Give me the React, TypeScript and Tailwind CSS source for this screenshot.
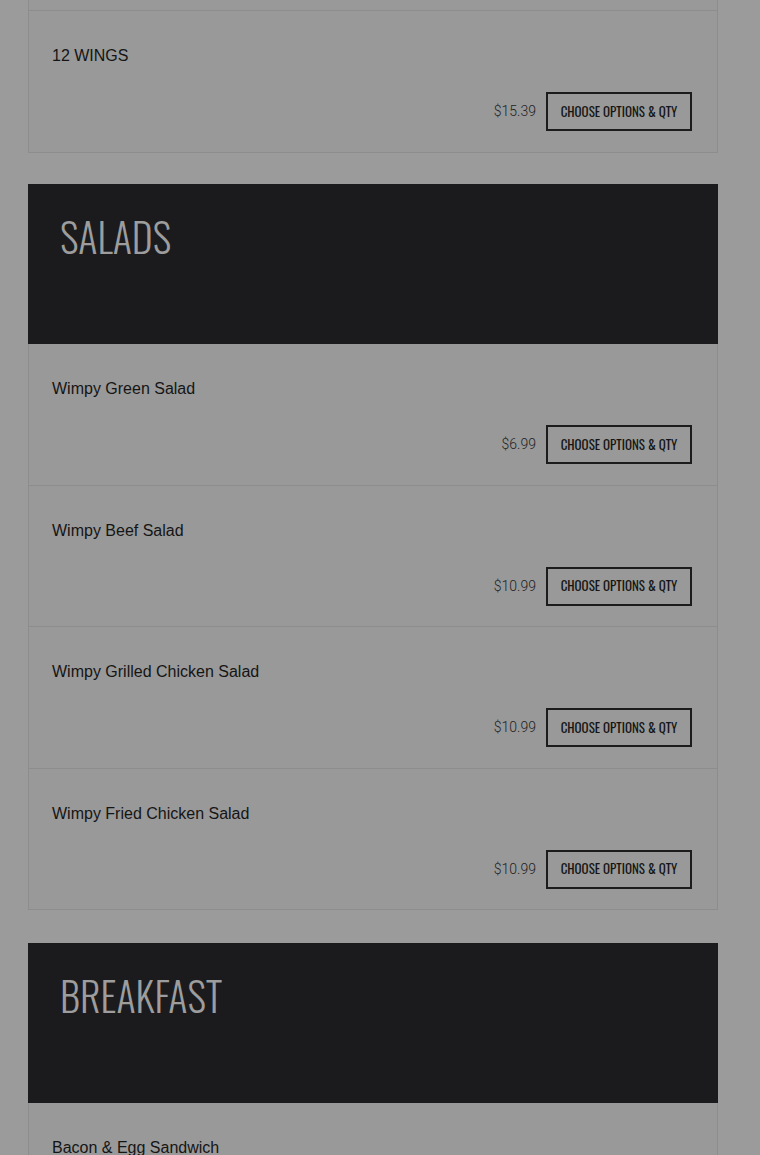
const salads = [
  { name: "Wimpy Green Salad", price: "$6.99" },
  { name: "Wimpy Beef Salad", price: "$10.99" },
  { name: "Wimpy Grilled Chicken Salad", price: "$10.99" },
  { name: "Wimpy Fried Chicken Salad", price: "$10.99" },
];

const condensed = "font-['Oswald','Liberation_Sans_Narrow','DejaVu_Sans_Condensed',sans-serif]";

function MenuItem({ name, price }: { name: string; price?: string }) {
  return (
    <div className="border-t border-[#8d8d8d] pt-[33px] pr-[25px] pb-[20.5px] pl-[23px] first:border-t-0">
      <div className="font-['Liberation_Sans',Arial,sans-serif] text-[16px] leading-6 text-[#151515]">
        {name}
      </div>
      {price && (
        <div className="mt-[24px] flex items-center justify-end gap-[10px]">
          <span className="font-['Roboto',sans-serif] text-[14px] font-light text-[#222222]">{price}</span>
          <button
            className={`flex h-[39px] w-[146px] items-center justify-center border-2 border-[#1c1c1c] text-[13px] font-normal text-[#151515] ${condensed}`}
          >
            CHOOSE OPTIONS &amp; QTY
          </button>
        </div>
      )}
    </div>
  );
}

function SectionHeader({ title }: { title: string }) {
  return (
    <div className="h-[160px] bg-[#1b1b1d] pl-[32px] pt-[30px]">
      <h2 className={`text-[40px] leading-[44px] font-light text-[#9d9d9d] ${condensed}`}>{title}</h2>
    </div>
  );
}

export default function App() {
  return (
    <div className="min-h-screen bg-[#9b9b9b] pl-[28px] pr-[42px]">
      <div className="border-x border-b border-[#8d8d8d] bg-[#999999]">
        <div className="h-[10px]" />
        <div className="border-t border-[#8d8d8d]">
          <MenuItem name="12 WINGS" price="$15.39" />
        </div>
      </div>

      <div className="mt-[31.5px]">
        <SectionHeader title="SALADS" />
        <div className="border-x border-b border-[#8d8d8d] bg-[#999999]">
          {salads.map((item) => (
            <MenuItem key={item.name} name={item.name} price={item.price} />
          ))}
        </div>
      </div>

      <div className="mt-[33px]">
        <SectionHeader title="BREAKFAST" />
        <div className="border-x border-b border-[#8d8d8d] bg-[#999999]">
          <MenuItem name="Bacon & Egg Sandwich" price="$6.49" />
        </div>
      </div>
    </div>
  );
}
